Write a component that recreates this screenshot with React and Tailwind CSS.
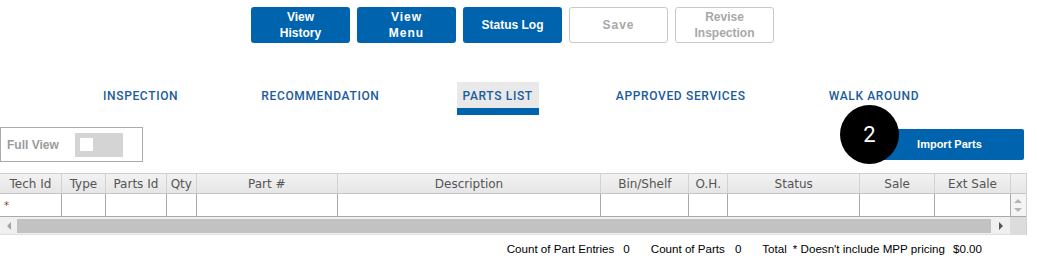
const topButtons = [
  { label: ['View', 'History'], active: true },
  { label: ['View', 'Menu'], active: true, wide: true },
  { label: ['Status Log'], active: true },
  { label: ['Save'], active: false, wide: true },
  { label: ['Revise', 'Inspection'], active: false },
];

const tabs = ['Inspection', 'Recommendation', 'Parts List', 'Approved Services', 'Walk Around'];

const columns = [
  { name: 'Tech Id', w: 61 },
  { name: 'Type', w: 44 },
  { name: 'Parts Id', w: 61 },
  { name: 'Qty', w: 30 },
  { name: 'Part #', w: 141 },
  { name: 'Description', w: 264 },
  { name: 'Bin/Shelf', w: 88 },
  { name: 'O.H.', w: 39 },
  { name: 'Status', w: 132 },
  { name: 'Sale', w: 75 },
  { name: 'Ext Sale', w: 76 },
];

function TopButton({ label, active, wide }) {
  return (
    <button
      className={
        'w-[99px] h-[36px] rounded-[3px] flex flex-col items-center justify-center text-[12px] font-bold leading-[16px] ' +
        (active ? 'bg-[#0063ae] text-white' : 'bg-white text-[#a8a8a8] border border-[#c9c9c9]') +
        (wide ? ' tracking-[1px]' : '')
      }
    >
      {label.map(l => (
        <span key={l}>{l}</span>
      ))}
    </button>
  );
}

export default function App() {
  return (
    <div className="relative w-[1037px] h-[258px] overflow-hidden bg-white font-['Liberation_Sans',Arial,sans-serif]">
      <div className="flex justify-center gap-[7px] pt-[7px] pr-[12px]">
        {topButtons.map(b => (
          <TopButton key={b.label.join(' ')} {...b} />
        ))}
      </div>

      <div className="flex gap-[71px] pl-[97px] mt-[39px] font-['Roboto',sans-serif]">
        {tabs.map(t => {
          const active = t === 'Parts List';
          return (
            <div key={t} className="flex flex-col">
              <div
                className={
                  'h-[26px] px-[6px] flex items-center pt-[2px] uppercase text-[12px] font-medium tracking-[0.65px] text-[#1a5c9c] ' +
                  (active ? 'bg-[#e9e9e9]' : '')
                }
              >
                {t}
              </div>
              <div className={'h-[7px] ' + (active ? 'bg-[#0063ae]' : '')} />
            </div>
          );
        })}
      </div>

      <div className="flex items-center justify-between mt-[12px] pr-[13px]">
        <div className="w-[143px] h-[35px] border border-[#ababab] flex items-center pl-[6px]">
          <span className="text-[12px] font-bold text-[#9b9b9b]">Full View</span>
          <div className="ml-[16px] w-[48px] h-[24px] bg-[#d4d4d4] flex items-center pl-[5px]">
            <div className="w-[13px] h-[13px] bg-white" />
          </div>
        </div>
        <button className="w-[149px] h-[31px] rounded-[2px] bg-[#0063ae] text-white text-[11px] font-bold">
          Import Parts
        </button>
      </div>

      <div className="absolute left-[840px] top-[105px] w-[59px] h-[59px] rounded-full bg-black flex items-center justify-center text-white text-[22px] font-['Roboto',sans-serif] pb-[1px]">
        2
      </div>

      <div className="mt-[11px] w-[1027px] border-r border-[#d0d0d0] font-['DejaVu_Sans',Verdana,sans-serif]">
        <div className="flex h-[20px] border-t border-[#cfcfcf] bg-gradient-to-b from-[#f2f2f2] to-[#e6e6e6]">
          {columns.map((c, i) => (
            <div
              key={c.name}
              style={{ width: c.w }}
              className={'flex items-center justify-center text-[12px] text-[#555] ' + (i > 0 ? 'border-l border-[#d2d2d2]' : '')}
            >
              {c.name}
            </div>
          ))}
          <div className="w-[16px] border-l border-[#d2d2d2]" />
        </div>
        <div className="flex h-[24px] border-t border-[#c4c4c4] border-b border-b-[#a9a9a9]">
          {columns.map((c, i) => (
            <div
              key={c.name}
              style={{ width: c.w }}
              className={'relative ' + (i > 0 ? 'border-l border-[#a9a9a9]' : '')}
            >
              {i === 0 && (
                <span className="absolute left-[4px] top-[7px] text-[10px] leading-none text-[#8a3b2e]">*</span>
              )}
            </div>
          ))}
          <div className="w-[16px] border-l border-[#a9a9a9] bg-[#f4f4f4] flex flex-col items-center justify-center gap-[5px]">
            <div className="w-0 h-0 border-l-[4px] border-r-[4px] border-b-[4px] border-l-transparent border-r-transparent border-b-[#b5b5b5]" />
            <div className="w-0 h-0 border-l-[4px] border-r-[4px] border-t-[4px] border-l-transparent border-r-transparent border-t-[#b5b5b5]" />
          </div>
        </div>
        <div className="flex h-[18px] border-b border-[#dedede]">
          <div className="flex-1 bg-[#f0f0f0] flex items-center">
            <div className="w-[17px] flex justify-center">
              <div className="w-0 h-0 border-t-[4px] border-b-[4px] border-r-[4px] border-t-transparent border-b-transparent border-r-[#a3a3a3]" />
            </div>
            <div className="flex-1 h-[14px] bg-[#c2c2c2]" />
            <div className="w-[19px] flex justify-center">
              <div className="w-0 h-0 border-t-[4px] border-b-[4px] border-l-[4px] border-t-transparent border-b-transparent border-l-[#555]" />
            </div>
          </div>
          <div className="w-[16px] bg-[#dcdcdc]" />
        </div>
      </div>

      <div className="flex justify-end pr-[55px] mt-[7px] text-[11.6px] text-[#000] leading-[14px]">
        <span>Count of Part Entries</span>
        <span className="ml-[9px]">0</span>
        <span className="ml-[21px]">Count of Parts</span>
        <span className="ml-[10px]">0</span>
        <span className="ml-[21px]">Total</span>
        <span className="ml-[6px]">* Doesn't include MPP pricing</span>
        <span className="ml-[8px]">$0.00</span>
      </div>
    </div>
  );
}
